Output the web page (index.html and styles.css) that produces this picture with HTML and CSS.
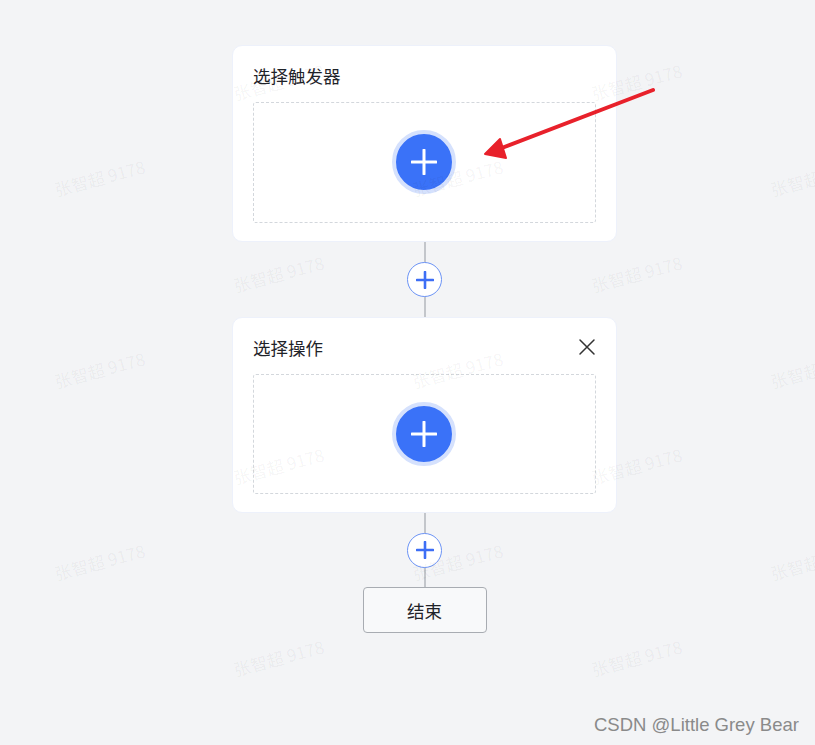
FILE: index.html
```html
<!DOCTYPE html>
<html lang="zh">
<head>
<meta charset="utf-8">
<title>流程</title>
<link rel="stylesheet" href="styles.css">
</head>
<body>
<main class="flow">
  <section class="card">
    <div class="card-head">
      <span class="card-title">选择触发器</span>
    </div>
    <div class="drop">
      <button class="add-big" aria-label="添加">
        <svg width="26" height="26" viewBox="0 0 26 26"><path d="M13 1v24M1 13h24" stroke="#fff" stroke-width="3" stroke-linecap="round"/></svg>
      </button>
    </div>
  </section>
  <div class="connector">
    <button class="add-small" aria-label="添加">
      <svg width="18" height="18" viewBox="0 0 18 18"><path d="M9 1v16M1 9h16" stroke="#3d6ef5" stroke-width="2.6" stroke-linecap="round"/></svg>
    </button>
  </div>
  <section class="card second">
    <div class="card-head">
      <span class="card-title">选择操作</span>
      <svg class="close" width="18" height="18" viewBox="0 0 18 18"><path d="M2 2l14 14M16 2L2 16" stroke="#333" stroke-width="1.5" stroke-linecap="round"/></svg>
    </div>
    <div class="drop">
      <button class="add-big" aria-label="添加">
        <svg width="26" height="26" viewBox="0 0 26 26"><path d="M13 1v24M1 13h24" stroke="#fff" stroke-width="3" stroke-linecap="round"/></svg>
      </button>
    </div>
  </section>
  <div class="connector short">
    <button class="add-small" aria-label="添加">
      <svg width="18" height="18" viewBox="0 0 18 18"><path d="M9 1v16M1 9h16" stroke="#3d6ef5" stroke-width="2.6" stroke-linecap="round"/></svg>
    </button>
  </div>
  <div class="end">结束</div>
</main>

<div class="watermarks" aria-hidden="true">
  <span class="wm"></span><span class="wm">张智超 9178</span><span class="wm"></span><span class="wm">张智超 9178</span><span class="wm"></span>
  <span class="wm">张智超 9178</span><span class="wm"></span><span class="wm">张智超 9178</span><span class="wm"></span><span class="wm">张智超 9178</span>
  <span class="wm"></span><span class="wm">张智超 9178</span><span class="wm"></span><span class="wm">张智超 9178</span><span class="wm"></span>
  <span class="wm">张智超 9178</span><span class="wm"></span><span class="wm">张智超 9178</span><span class="wm"></span><span class="wm">张智超 9178</span>
  <span class="wm"></span><span class="wm">张智超 9178</span><span class="wm"></span><span class="wm">张智超 9178</span><span class="wm"></span>
  <span class="wm">张智超 9178</span><span class="wm"></span><span class="wm">张智超 9178</span><span class="wm"></span><span class="wm">张智超 9178</span>
  <span class="wm"></span><span class="wm">张智超 9178</span><span class="wm"></span><span class="wm">张智超 9178</span><span class="wm"></span>
</div>

<svg class="arrow" width="815" height="745" viewBox="0 0 815 745" aria-hidden="true">
  <path d="M653 90L499 149" stroke="#e8212b" stroke-width="4" stroke-linecap="round" fill="none"/>
  <path d="M485 154L500 139L506 158Z" fill="#e8212b" stroke="#e8212b" stroke-width="2" stroke-linejoin="round"/>
</svg>

<div class="credit">CSDN @Little Grey Bear</div>
</body>
</html>
```

FILE: styles.css
```css
* { box-sizing: border-box; }

html, body {
  margin: 0;
  padding: 0;
}

body {
  width: 815px;
  height: 745px;
  overflow: hidden;
  position: relative;
  background: #f3f4f6;
  font-family: "Noto Sans CJK SC", "Noto Sans", sans-serif;
  color: #1f2329;
}

.flow {
  display: flex;
  flex-direction: column;
  align-items: center;
  width: 385px;
  margin-left: 232px;
  padding-top: 45px;
}

.card {
  width: 385px;
  height: 197px;
  background: #fff;
  border: 1px solid #edf1fb;
  border-radius: 10px;
  padding: 19px 20px 18px;
  display: flex;
  flex-direction: column;
}

.card.second { height: 196px; }

.card-head {
  display: flex;
  align-items: center;
  justify-content: space-between;
  height: 22px;
  margin-bottom: 15px;
}

.card-title {
  font-size: 17.5px;
  line-height: 22px;
  color: #1f2329;
}

.close {
  display: block;
  margin-right: 0;
  margin-top: -2px;
}

.drop {
  flex: 1;
  border: 1px dashed #d3d7dc;
  border-radius: 3px;
  display: flex;
  align-items: center;
  justify-content: center;
}

button {
  padding: 0;
  font: inherit;
  cursor: pointer;
}

.add-big {
  width: 64px;
  height: 64px;
  border-radius: 50%;
  border: 4px solid #d5e1fd;
  background: #3a72f8;
  display: flex;
  align-items: center;
  justify-content: center;
  margin-top: -1px;
  margin-left: -1px;
}

.add-big svg { display: block; }

.connector {
  height: 75px;
  width: 100%;
  display: flex;
  align-items: center;
  justify-content: center;
  background: linear-gradient(#c3c6cb, #c3c6cb) no-repeat center / 2px 100%;
}

.connector.short { height: 74px; }

.add-small {
  width: 35px;
  height: 35px;
  border-radius: 50%;
  border: 1px solid #6b93f5;
  background: #fff;
  display: flex;
  align-items: center;
  justify-content: center;
}

.add-small svg { display: block; }

.end {
  width: 124px;
  height: 46px;
  border: 1px solid #a8acb2;
  border-radius: 4px;
  background: #f8f9fa;
  display: flex;
  align-items: center;
  justify-content: center;
  font-size: 17.5px;
  color: #1f2329;
}

.watermarks {
  position: absolute;
  left: 10px;
  top: 33px;
  width: 895px;
  display: grid;
  grid-template-columns: repeat(5, 179px);
  grid-auto-rows: 96px;
  pointer-events: none;
}

.wm {
  display: flex;
  align-items: center;
  justify-content: center;
  font-family: "Noto Sans CJK SC", "Noto Sans", sans-serif;
  font-size: 17px;
  color: rgba(0, 0, 0, 0.05);
  transform: rotate(-15deg);
  white-space: nowrap;
}

.arrow {
  position: absolute;
  left: 0;
  top: 0;
  pointer-events: none;
}

.credit {
  position: absolute;
  left: 594px;
  top: 713px;
  font-family: "Liberation Sans", Arial, sans-serif;
  font-size: 18.5px;
  line-height: 24px;
  color: #8a8a8a;
  white-space: nowrap;
}
```
